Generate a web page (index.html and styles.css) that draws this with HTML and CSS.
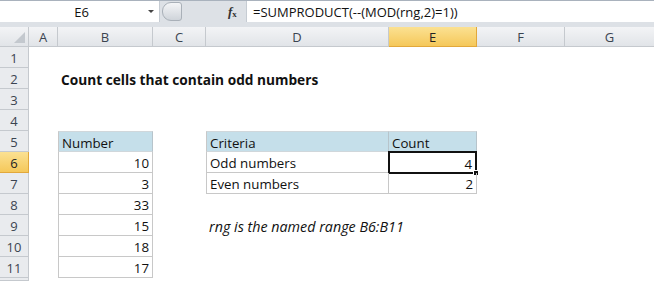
FILE: index.html
```html
<!DOCTYPE html>
<html lang="en">
<head>
  <meta charset="UTF-8">
  <title>Count cells that contain odd numbers</title>
  <link rel="stylesheet" href="styles.css">
</head>
<body>

  <!-- Formula bar -->
  <div class="formula-bar">
    <div class="name-box">
      <span class="name-text">E6</span>
      <span class="name-arrow"></span>
    </div>
    <div class="splitter">
      <span class="knob"></span>
    </div>
    <div class="fx"><i>f</i><span>x</span></div>
    <div class="formula">=SUMPRODUCT(--(MOD(rng,2)=1))</div>
  </div>

  <!-- Sheet -->
  <div class="sheet">
    <div class="hd corner"><span class="tri"></span></div>
    <div class="hd col">A</div>
    <div class="hd col">B</div>
    <div class="hd col">C</div>
    <div class="hd col">D</div>
    <div class="hd col sel">E</div>
    <div class="hd col">F</div>
    <div class="hd col last">G</div>

    <div class="hd row">1</div>
    <div class="cell span7"></div>

    <div class="hd row">2</div>
    <div class="cell"></div>
    <div class="cell title span6">Count cells that contain odd numbers</div>

    <div class="hd row">3</div>
    <div class="cell span7"></div>

    <div class="hd row">4</div>
    <div class="cell span7"></div>

    <div class="hd row">5</div>
    <div class="cell"></div>
    <div class="cell th first top">Number</div>
    <div class="cell"></div>
    <div class="cell th first top">Criteria</div>
    <div class="cell th top">Count</div>
    <div class="cell span2"></div>

    <div class="hd row sel">6</div>
    <div class="cell"></div>
    <div class="cell td first num">10</div>
    <div class="cell"></div>
    <div class="cell td first">Odd numbers</div>
    <div class="cell td num active">4<span class="handle"></span></div>
    <div class="cell span2"></div>

    <div class="hd row">7</div>
    <div class="cell"></div>
    <div class="cell td first num">3</div>
    <div class="cell"></div>
    <div class="cell td first">Even numbers</div>
    <div class="cell td num">2</div>
    <div class="cell span2"></div>

    <div class="hd row">8</div>
    <div class="cell"></div>
    <div class="cell td first num">33</div>
    <div class="cell span5"></div>

    <div class="hd row">9</div>
    <div class="cell"></div>
    <div class="cell td first num">15</div>
    <div class="cell"></div>
    <div class="cell note span4">rng is the named range B6:B11</div>

    <div class="hd row">10</div>
    <div class="cell"></div>
    <div class="cell td first num">18</div>
    <div class="cell span5"></div>

    <div class="hd row">11</div>
    <div class="cell"></div>
    <div class="cell td first num">17</div>
    <div class="cell span5"></div>

    <div class="hd row"></div>
    <div class="cell span7"></div>
  </div>

</body>
</html>
```

FILE: styles.css
```css
* { margin: 0; padding: 0; box-sizing: border-box; }
body {
  font-family: "Open Sans", "Liberation Sans", sans-serif;
  font-size: 13.3px;
  color: #111;
  background: #fff;
  width: 654px;
  height: 281px;
  overflow: hidden;
}

/* formula bar */
.formula-bar {
  display: flex;
  height: 27px;
  background: #dde1e6;
  border-top: 1px solid #a9b2bd;
  padding-bottom: 5px;
}
.name-box {
  width: 160px;
  background: #fff;
  position: relative;
  display: flex;
  align-items: center;
  justify-content: center;
  border-right: 1px solid #c6ccd3;
}
.name-text { margin-left: 4px; font-size: 13px; }
.name-arrow {
  position: absolute;
  right: 5px;
  top: 9px;
  border-left: 3px solid transparent;
  border-right: 3px solid transparent;
  border-top: 3px solid #444;
}
.splitter {
  width: 68px;
  display: flex;
  align-items: center;
  padding-left: 2px;
}
.knob {
  width: 20px;
  height: 19px;
  border-radius: 9px 3px 3px 9px;
  background: linear-gradient(#f4f5f7, #cfd4da);
  border: 1px solid #a9b0b8;
}
.fx {
  width: 18px;
  display: flex;
  align-items: center;
  font-family: "Liberation Serif", serif;
  font-weight: bold;
  font-size: 13px;
  color: #333;
}
.fx span { font-size: 9px; margin-top: 4px; }
.formula {
  flex: 1;
  background: #fff;
  padding-left: 6px;
  display: flex;
  align-items: center;
  font-size: 13px;
  border-left: 1px solid #c6ccd3;
}

/* sheet grid */
.sheet {
  display: grid;
  grid-template-columns: 29px 29px 95px 53px 183px 88px 88px 89px;
  grid-template-rows: 20px repeat(11, 21px) 3px;
}
.hd {
  background: linear-gradient(#f3f4f6, #e1e4e8);
  color: #3b4450;
  display: flex;
  align-items: center;
  justify-content: center;
  font-size: 13px;
  border-right: 1px solid #c5c9ce;
  border-bottom: 1px solid #c5c9ce;
}
.hd.col { padding-top: 1px; }
.hd.last { border-right: none; }
.hd.row { background: #e9ebee; padding-top: 2px; }
.hd.sel {
  background: linear-gradient(#fbe192, #f5c85a);
  border-color: #e2a83b;
  color: #222;
}
.corner { position: relative; }
.tri {
  position: absolute;
  right: 3px;
  bottom: 3px;
  border-left: 11px solid transparent;
  border-bottom: 11px solid #c3c8ce;
}

.cell {
  display: flex;
  align-items: center;
  padding: 2px 3px 0;
  white-space: nowrap;
  position: relative;
}
.span2 { grid-column: span 2; }
.span4 { grid-column: span 4; }
.span5 { grid-column: span 5; }
.span6 { grid-column: span 6; }
.span7 { grid-column: span 7; }

.title { font-weight: bold; font-size: 13.7px; }
.note { font-style: italic; font-size: 14.3px; }

.th {
  background: #c5dfea;
  border-right: 1px solid #b7c4cb;
  border-bottom: 1px solid #d0d7db;
}
.top { border-top: 1px solid #d0d7db; }
.td {
  border-right: 1px solid #c8c8c8;
  border-bottom: 1px solid #c8c8c8;
}
.first { border-left: 1px solid #c8c8c8; }
.num { justify-content: flex-end; }

.active {
  border: 2px solid #111;
  margin: -1px 0 -1px -1px;
}
.handle {
  position: absolute;
  right: -4px;
  bottom: -4px;
  width: 6px;
  height: 6px;
  background: #111;
  border: 1px solid #fff;
}
```
